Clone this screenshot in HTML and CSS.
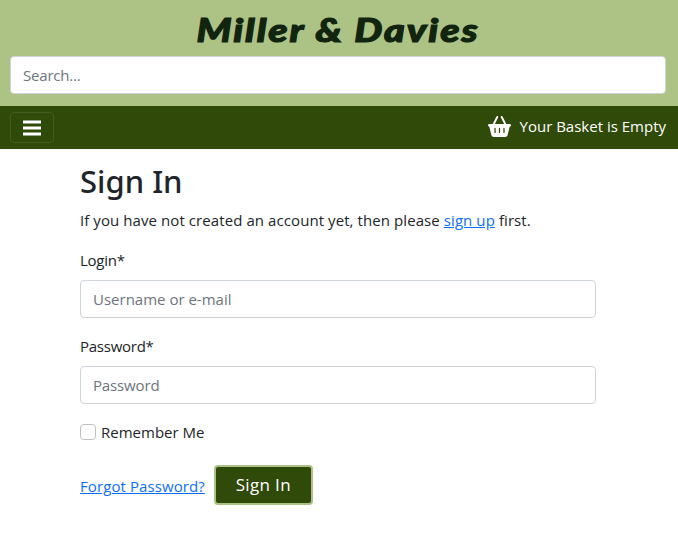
FILE: index.html
```html
<!DOCTYPE html>
<html lang="en">
<head>
<meta charset="utf-8">
<title>Sign In</title>
<link rel="stylesheet" href="styles.css">
</head>
<body>
<header class="header">
  <div class="brand">Miller &amp; Davies</div>
  <input class="control search" type="text" placeholder="Search...">
</header>
<nav class="navbar">
  <button class="toggler" aria-label="Menu">
    <svg width="20" height="16" viewBox="0 0 20 16"><path d="M1 2h18M1 8h18M1 14h18" stroke="#fff" stroke-width="3"/></svg>
  </button>
  <a class="basket">
    <svg width="23" height="21" viewBox="0 0 576 512" preserveAspectRatio="none"><path fill="#fff" d="M253.300 35.100c6.100-11.800 1.500-26.300-10.200-32.400s-26.300-1.500-32.400 10.200L117.600 192H32c-17.700 0-32 14.300-32 32s14.300 32 32 32L83.900 463.500C91 492 116.600 512 146 512H430c29.400 0 55-20 62.100-48.500L544 256c17.700 0 32-14.300 32-32s-14.300-32-32-32H458.400L365.300 12.900C359.200 1.200 344.700-3.400 332.900 2.700s-16.300 20.600-10.200 32.400L404.300 192H171.700L253.300 35.100zM192 304v96c0 8.800-7.200 16-16 16s-16-7.200-16-16V304c0-8.800 7.200-16 16-16s16 7.200 16 16zm96-16c8.800 0 16 7.200 16 16v96c0 8.800-7.200 16-16 16s-16-7.200-16-16V304c0-8.800 7.200-16 16-16zm128 16v96c0 8.800-7.200 16-16 16s-16-7.200-16-16V304c0-8.800 7.200-16 16-16s16 7.200 16 16z"/></svg>
    <span class="basket-text">Your Basket is Empty</span>
  </a>
</nav>
<main class="content">
  <h1 class="title">Sign In</h1>
  <p class="intro">If you have not created an account yet, then please <a class="link" href="#">sign up</a> first.</p>
  <label class="label" for="login">Login*</label>
  <input class="control field" id="login" type="text" placeholder="Username or e-mail">
  <label class="label" for="password">Password*</label>
  <input class="control field pass" id="password" type="password" placeholder="Password">
  <div class="remember"><input class="check" type="checkbox" id="remember"><label for="remember">Remember Me</label></div>
  <div class="actions">
    <a class="link forgot" href="#">Forgot Password?</a>
    <button class="submit">Sign In</button>
  </div>
</main>
</body>
</html>
```
FILE: styles.css
```css
* { box-sizing: border-box; }
body {
  margin: 0;
  background: #fff;
  color: #212529;
  font: 15px/24px "Open Sans", "Noto Sans", sans-serif;
}
.header {
  height: 106px;
  padding: 4px 12px 12px 10px;
  background: #adc285;
}
.brand {
  width: fit-content;
  height: 52px;
  margin: 0 auto;
  color: #11240f;
  font: italic 900 33px/50px Lato, sans-serif;
  letter-spacing: 1.6px;
  transform: scaleX(1.2);
  -webkit-text-stroke: 1.1px #11240f;
}
.control {
  display: block;
  width: 100%;
  height: 38px;
  padding: 6px 12px;
  border: 1px solid #ced4da;
  border-radius: 4px;
  background: #fff;
  color: #212529;
  font: inherit;
}
.control::placeholder { color: #6c757d; opacity: 1; }
.search { letter-spacing: -0.2px; }
.navbar {
  display: flex;
  align-items: center;
  justify-content: space-between;
  height: 43px;
  padding: 0 12px 0 10px;
  background: #2f4a09;
  color: #fff;
}
.toggler {
  display: flex;
  align-items: center;
  justify-content: center;
  width: 44px;
  height: 31px;
  padding: 0;
  border: 1px solid #445c22;
  border-radius: 4px;
  background: none;
}
.basket { display: flex; align-items: center; gap: 9px; padding-bottom: 3px; }
.content { width: 516px; margin-left: 80px; padding-top: 13px; }
.title {
  margin: 0 0 8px;
  font: 500 31px/38px "Noto Sans", sans-serif;
}
.intro { margin: 0 0 16px; letter-spacing: 0.08px; white-space: nowrap; }
.link { color: #0d6efd; text-decoration: underline; }
.label { display: block; margin-bottom: 8px; letter-spacing: -0.25px; }
.field { margin-bottom: 16px; }
.pass { letter-spacing: -0.15px; }
.remember { display: flex; align-items: center; gap: 5px; }
.check {
  appearance: none;
  width: 16px;
  height: 16px;
  margin: 0;
  border: 1px solid #bfbfbf;
  border-radius: 4px;
}
.actions { display: flex; align-items: center; gap: 9px; margin-top: 21px; }
.forgot { padding-top: 1px; letter-spacing: 0.09px; }
.submit {
  width: 99px;
  height: 40px;
  padding: 0;
  border: 2px solid #adc285;
  border-radius: 4px;
  background: #2f4a09;
  color: #fff;
  font: 17px/24px "Open Sans", sans-serif;
  letter-spacing: 0.35px;
}
```
